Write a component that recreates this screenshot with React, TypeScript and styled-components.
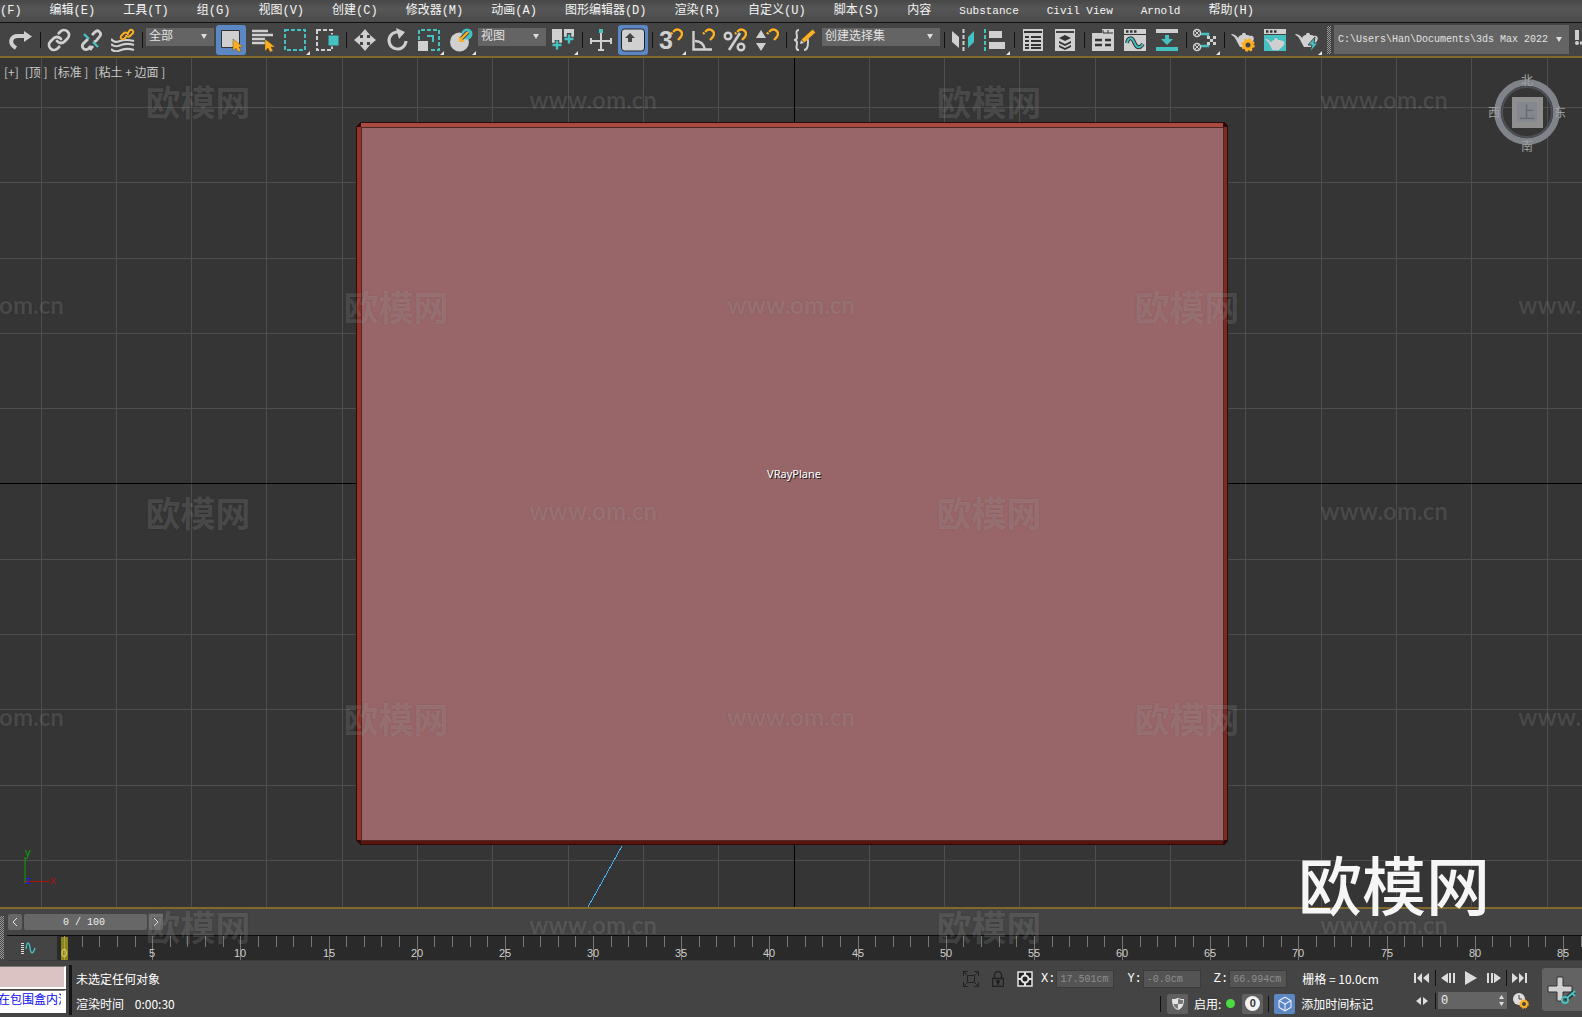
import React from "react";
import styled, { createGlobalStyle, css } from "styled-components";
import { Link as LinkIcon, Box as BoxIcon } from "lucide-react";

const C = {
  light: "#d0d0d0",
  teal: "#45c1c1",
  orange: "#fdb022",
  panel: "#444444",
  field: "#646464",
  gold: "#80692a",
  blue: "#5b87c5",
};
const cjk = `"Noto Sans CJK SC", sans-serif`;
const mono = `"Liberation Mono", "Noto Sans CJK SC", monospace`;

const Global = createGlobalStyle`
  *, *::before, *::after { box-sizing: border-box; }
  html, body { margin: 0; height: 100%; overflow: hidden; background: ${C.panel}; }
  button, input, select { font: inherit; color: inherit; margin: 0; }
  button > svg { flex: none; }
`;

const Shell = styled.div`
  position: relative;
  display: flex;
  flex-direction: column;
  height: 100vh;
  overflow: hidden;
  background: ${C.panel};
  color: #fff;
  font: 12px/16px ${mono};
`;

/* ---------- menu ---------- */
const MenuBar = styled.nav`
  display: flex;
  flex: none;
  gap: 28px;
  height: 23px;
  margin-left: -24px;
  background: linear-gradient(#484848, #565656 40%, #4b4b4b);
  border-bottom: 1px solid #111;
`;
const MenuItem = styled.button<{ $latin?: boolean }>`
  flex: none;
  padding: 0;
  border: 0;
  background: none;
  font-size: ${(p) => (p.$latin ? 11 : 12)}px;
  line-height: 20px;
  white-space: nowrap;
  color: #f4f4f4;
`;

/* ---------- toolbar ---------- */
const Toolbar = styled.div`
  display: flex;
  flex: none;
  align-items: center;
  height: 33px;
  padding-left: 5px;
  overflow: hidden;
`;
const Tool = styled.button<{ $active?: boolean; $more?: boolean }>`
  position: relative;
  display: flex;
  flex: none;
  align-items: center;
  justify-content: center;
  width: 30px;
  height: 30px;
  margin: 0 1px;
  padding: 0;
  border: 0;
  border-radius: 3px;
  background: ${(p) => (p.$active ? C.blue : "transparent")};
  color: ${C.light};
  ${(p) =>
    p.$more &&
    css`
      &::after {
        content: "";
        position: absolute;
        right: 0;
        bottom: 0;
        border: 2px solid transparent;
        border-right-color: #e4e4e4;
        border-bottom-color: #e4e4e4;
      }
    `}
`;
const Divider = styled.span<{ $h?: number }>`
  flex: none;
  width: 1px;
  height: ${(p) => p.$h ?? 16}px;
  background: #111;
`;
const ToolDivider = styled(Divider)`
  margin: 0 2px 0 3px;
`;
const Pick = styled.span<{ $w?: number; $tall?: boolean }>`
  position: relative;
  display: flex;
  width: ${(p) => (p.$w ? `${p.$w}px` : "auto")};
  flex: ${(p) => (p.$w ? "none" : "1")};
  height: ${(p) => (p.$tall ? 29 : 18)}px;
  margin: 0 1px ${(p) => (p.$tall ? 0 : 6)}px;
  &::after {
    content: "";
    position: absolute;
    right: 7px;
    top: calc(50% - 3px);
    border: 3px solid transparent;
    border-top: 5px solid #ddd;
    border-bottom: 0;
    pointer-events: none;
  }
`;
const Select = styled.select<{ $small?: boolean }>`
  appearance: none;
  width: 100%;
  padding: 0 16px 0 ${(p) => (p.$small ? 4 : 3)}px;
  border: 0;
  border-radius: 0;
  background: ${C.field};
  color: #e2e2e2;
  font-size: ${(p) => (p.$small ? 10 : 12)}px;
`;
const Grip = styled.span`
  flex: none;
  width: 4px;
  height: 28px;
  margin: 0 2px 0 4px;
  background: repeating-conic-gradient(#999 0 25%, #444 0 50%) 0 0 / 2px 2px;
`;
const ToolCut = styled(Tool)`
  width: 8px;
  margin: 0 0 0 4px;
  justify-content: flex-start;
  overflow: hidden;
`;

/* ---------- viewport ---------- */
const Viewport = styled.main`
  position: relative;
  flex: 1;
  min-height: 0;
  border: solid ${C.gold};
  border-width: 2px 0;
  background: #353535;
  overflow: hidden;
`;
const Scene = styled.svg`
  display: block;
  width: 100%;
  height: 100%;
`;
const ViewLabels = styled.div`
  position: absolute;
  top: 6px;
  left: 4px;
  display: flex;
  gap: 6px;
`;
const ViewLabel = styled.button`
  padding: 0;
  border: 0;
  background: none;
  color: #c8c8c8;
  font: 12px/16px ${cjk};
  white-space: pre;
`;
const Cube = styled.svg`
  position: absolute;
  top: 12px;
  right: 13px;
`;
const Tripod = styled.svg`
  position: absolute;
  left: 20px;
  bottom: 16px;
`;

/* ---------- timeline ---------- */
const Timeline = styled.section`
  display: flex;
  flex: none;
`;
const TimelineGrip = styled(Grip)`
  height: 43px;
  margin: 7px 3px 0 0;
`;
const TimelineBody = styled.div`
  flex: 1;
  min-width: 0;
`;
const Scrub = styled.div`
  display: flex;
  gap: 2px;
  height: 26px;
  padding: 5px 0 5px 1px;
`;
const ScrubButton = styled.button<{ $wide?: boolean }>`
  display: flex;
  align-items: center;
  justify-content: center;
  width: ${(p) => (p.$wide ? 123 : 14)}px;
  padding: ${(p) => (p.$wide ? "1px 3px 0 0" : 0)};
  border: 0;
  border-radius: 2px;
  background: #676767;
  color: #eee;
  font-size: 10px;
`;
const Track = styled.div`
  display: flex;
  height: 26px;
  border-top: 1px solid #0c0c0c;
  border-bottom: 1px solid #3a3a3a;
`;
const CurveToggle = styled.button`
  flex: none;
  width: 50px;
  padding: 0 8px 0 0;
  border: 0;
  background: ${C.panel};
  line-height: 0;
`;
const Ruler = styled.svg`
  flex: 1;
  min-width: 0;
  height: 24px;
  background: #2a2a2a;
  overflow: hidden;
  font: 11px "Liberation Sans", sans-serif;
`;

/* ---------- status ---------- */
const Status = styled.footer`
  display: flex;
  flex: none;
  height: 56px;
  padding-top: 4px;
`;
const Listener = styled.div`
  display: flex;
  flex: none;
  flex-direction: column;
  gap: 1px;
  width: 66px;
  padding-top: 1px;
`;
const ListenerField = styled.input<{ $pink?: boolean }>`
  width: 66px;
  height: 23px;
  padding: 0 3px 5px 0;
  border: solid #fff;
  border-width: 0 2px 2px 0;
  border-top: 1px solid #777;
  border-radius: 0;
  background: ${(p) => (p.$pink ? "#dcc3c3" : "#fff")};
  color: #0b0bf0;
  text-indent: -2px;
`;
const Prompt = styled.div`
  display: flex;
  flex: 1;
  flex-direction: column;
  gap: 9px;
  min-width: 0;
  margin-left: 3px;
  padding: 6px 0 0 4px;
  height: 50px;
  border-left: 3px solid #141414;
  font-family: ${cjk};
  white-space: pre;
`;
const Info = styled.div`
  display: flex;
  flex: none;
  flex-direction: column;
  gap: 4px;
  width: 441px;
  padding-top: 3px;
`;
const InfoRow = styled.div<{ $lead?: number }>`
  display: flex;
  align-items: center;
  height: 21px;
  padding-left: ${(p) => p.$lead ?? 0}px;
`;
const IconButton = styled.button<{ $fill?: string; $w?: number }>`
  position: relative;
  display: flex;
  flex: none;
  align-items: center;
  justify-content: center;
  width: ${(p) => p.$w ?? 21}px;
  height: 20px;
  padding: 0;
  border: 0;
  border-radius: 2px;
  background: ${(p) => p.$fill ?? "none"};
  color: ${C.light};
`;
const StartButton = styled(IconButton)`
  padding-left: 8px;
`;
const Axes = styled.div`
  display: flex;
  margin-left: 4px;
`;
const AxisLabel = styled.label`
  display: flex;
  align-items: center;
  gap: 1px;
  margin-right: 13px;
`;
const AxisInput = styled.input`
  width: 58px;
  height: 18px;
  padding: 1px 3px 0;
  border: 1px solid #3c3c3c;
  border-radius: 0;
  background: #545454;
  color: #8e8e8e;
  font-size: 10px;
`;
const GridText = styled.span`
  margin-left: 2px;
  font: 12px/16px ${cjk};
  white-space: nowrap;
`;
const Small = styled.span`
  font: 12px/16px ${cjk};
  white-space: nowrap;
  margin: 0 5px 0 6px;
`;
const Dot = styled.span`
  width: 9px;
  height: 9px;
  margin-right: 7px;
  border-radius: 50%;
  background: #4cdb43;
`;
const Zero = styled.span`
  width: 15px;
  height: 15px;
  border-radius: 50%;
  background: #f2f2f2;
  color: #333;
  font: bold 11px/15px "Liberation Sans", sans-serif;
`;
const SideDivider = styled(Divider)<{ $l: number; $r: number }>`
  margin: 0 ${(p) => p.$r}px 0 ${(p) => p.$l}px;
`;
const Player = styled.div`
  display: flex;
  flex: none;
  flex-direction: column;
  gap: 2px;
  width: 138px;
  padding-top: 2px;
`;
const PlayerRow = styled.div`
  display: flex;
  align-items: center;
  height: 21px;
`;
const Frame = styled.label`
  position: relative;
  display: flex;
  margin-left: 2px;
`;
const FrameInput = styled.input`
  width: 69px;
  height: 17px;
  padding: 0 3px;
  border: 0;
  border-radius: 0;
  background: ${C.field};
  color: #eee;
`;
const Arrows = styled.svg`
  position: absolute;
  right: 3px;
  top: 3px;
`;
const KeyButton = styled.button`
  flex: none;
  width: 44px;
  height: 43px;
  margin: 3px -4px 0 4px;
  padding: 0 5px 0 0;
  border: 0;
  border-radius: 3px;
  background: #636363;
  line-height: 0;
`;

/* ---------- overlay ---------- */
const Overlay = styled.div`
  position: absolute;
  inset: 0;
  overflow: hidden;
  pointer-events: none;
`;
const Mark = styled.span<{ $x: number; $y: number; $url?: boolean }>`
  position: absolute;
  left: ${(p) => p.$x}%;
  top: ${(p) => p.$y}px;
  width: 128px;
  margin-left: -64px;
  text-align: center;
  white-space: nowrap;
  color: rgba(255, 255, 255, 0.13);
  text-shadow: 0 0 2px rgba(0, 0, 0, 0.12);
  font: ${(p) => (p.$url ? `bold 24px/36px Lato, sans-serif` : `bold 35px/36px ${cjk}`)};
`;
const Brand = styled.strong`
  position: absolute;
  right: 92px;
  bottom: 103px;
  font: 500 64px/64px ${cjk};
  color: #f6f6f6;
`;

/* ---------- icons ---------- */
const Svg = ({ children, s = 24, h }: { children: React.ReactNode; s?: number; h?: number }) => (
  <svg width={s} height={h ?? s} viewBox={`0 0 ${s} ${h ?? s}`} fill="none" aria-hidden="true">
    {children}
  </svg>
);
const cursor = <path d="M14 11v12l3-3 2 4 3-1-2-4h4z" fill={C.orange} stroke="#6a501c" strokeWidth=".5" />;
const magnet = (
  <path d="M12 6l3-3c3-3 8-1 8 3 0 2-1 3-4 6" stroke={C.orange} strokeWidth="2.4" strokeDasharray="2 1 30" />
);
const pot = (
  <path
    d="M0 6c3 0 5 1 7 4 1-2 2-3 4-3 0-3 4-3 4 0 2 0 3 0 4 1 3-1 5 2 3 5-1 2-3 3-4 4l-2 2H9c-2-3-3-6-5-9C3 8 1 8 0 6z"
    fill={C.light}
  />
);
const I: Record<string, React.ReactNode> = {
  redo: <Svg><path d="M7 20C-1 15 2 8 9 8h7" stroke={C.light} strokeWidth="4" /><path d="M15 3l8 5.5-8 5.5z" fill={C.light} /></Svg>,
  link: <LinkIcon size={24} strokeWidth={2.8} color={C.light} />,
  unlink: (
    <Svg>
      <path d="M13 7l3-3c3-3 7 1 5 4l-4 5-2 1M9 11l-5 5c-2 3 1 7 5 5l3-3M11 22l3-4" stroke={C.light} strokeWidth="2.8" />
      <path d="M5 6l5 5M14 14l5 5" stroke={C.teal} strokeWidth="2.4" />
    </Svg>
  ),
  bind: (
    <Svg>
      <path d="M0 11c3 4 6 3 9 2s6-2 14 0M0 16c4 4 7 2 10 1s7-2 13 0M0 21c4 4 7 2 10 1s7-2 13 0" stroke={C.light} strokeWidth="2.2" />
      <path d="M15 9l-2 2c-2 1-4-1-3-3l3-3c2-1 4 0 4 2M17 5l2-3c2-1 4 1 3 3l-3 3c-1 1-4 1-4-1" stroke={C.orange} strokeWidth="2" />
    </Svg>
  ),
  select: <Svg><path d="M2.500 2.500h18v17h-18z" fill={C.light} stroke="#333" />{cursor}</Svg>,
  byName: <Svg><path d="M1 3h16M1 7h21M1 11h13M1 15h13" stroke={C.light} strokeWidth="2.4" />{cursor}</Svg>,
  region: <Svg><path d="M2 2h20v20H2z" stroke={C.teal} strokeWidth="2" strokeDasharray="4 2" /></Svg>,
  crossing: <Svg><path d="M2 2h15v20H2z" stroke={C.light} strokeWidth="2" strokeDasharray="4 2" /><path d="M13 7h11v11H13z" fill={C.teal} stroke="#444" /></Svg>,
  move: <Svg><path d="M12 1l5 6h-3v3h3V7l6 5-6 5v-3h-3v3h3l-5 6-5-6h3v-3H7v3l-6-5 6-5v3h3V7H7z" fill={C.light} /></Svg>,
  rotate: <Svg><path d="M18 6a8.500 8.500 0 1 0 3 7" stroke={C.light} strokeWidth="3" /><path d="M11 0l9 4-6 7z" fill={C.light} /></Svg>,
  scale: <Svg><path d="M2 12V2h20v20H13" stroke={C.teal} strokeWidth="2" strokeDasharray="4 2" /><path d="M1 13h10v10H1z" fill={C.light} /><path d="M10 8h6v6" stroke={C.teal} strokeWidth="2" /></Svg>,
  place: <Svg><circle cx="10.500" cy="14" r="9.500" fill={C.light} /><circle cx="18" cy="6" r="5.500" fill={C.teal} /><path d="M19 4l-7 7" stroke="#444" strokeWidth="4" /><path d="M19 4l-7 7" stroke={C.orange} strokeWidth="2.400" /><path d="M10 14V8l6 6z" fill={C.orange} /></Svg>,
  pivot: (
    <Svg>
      <path d="M1 1h10v14H1zM13 1h10v12H13z" fill={C.light} />
      <path d="M6 12v11M1 17h11M18 5v12M13 11h11" stroke="#444" strokeWidth="4.500" />
      <path d="M6 12.500v9M1.500 17h9M18 6.500v9M13.500 11h9" stroke={C.teal} strokeWidth="2.400" />
    </Svg>
  ),
  manip: <Svg><path d="M12 5v18M1 13h22M2 10v6M22 10v6M9 22h6" stroke={C.light} strokeWidth="2" /><path d="M10 1h4v4h-4z" fill={C.teal} /></Svg>,
  keyboard: <Svg><rect x=".5" y="1" width="23" height="22" rx="3" fill={C.light} stroke="#222" /><path d="M9 5l5 5h-3v4H7v-4H4z" fill="#444" /></Svg>,
  snap: (
    <Svg>
      <text x="0" y="21" fill={C.light} fontFamily="Liberation Sans, sans-serif" fontWeight="bold" fontSize="25">3</text>
      {magnet}
    </Svg>
  ),
  angle: <Svg><path d="M2.500 3v18.500H21M4 13c5 0 9 3 10 9" stroke={C.light} strokeWidth="2.400" />{magnet}</Svg>,
  percent: <Svg><circle cx="5" cy="8" r="3.300" stroke={C.light} strokeWidth="2.400" /><circle cx="18" cy="19" r="3.300" stroke={C.light} strokeWidth="2.400" /><path d="M6 22L17 5" stroke={C.light} strokeWidth="2.600" />{magnet}</Svg>,
  spin: <Svg><path d="M6 2l5 8H1zM6 23l5-8H1z" fill={C.light} />{magnet}</Svg>,
  sets: <Svg><path d="M6 2C2 2 4 7 4 9s-1 3-3 3c2 0 3 1 3 3s-2 7 2 7M13 10c2 0 2 2 2 4s0 8-4 8" stroke={C.light} strokeWidth="2" /><path d="M10 13L21 3" stroke={C.orange} strokeWidth="4" /><path d="M7 16l1-4 3 3z" fill={C.light} /></Svg>,
  mirror: <Svg><path d="M1 3l7 6v11l-7-6z" fill={C.light} /><path d="M23 3l-6 6v11l6-6z" fill={C.teal} /><path d="M12.500 1v22" stroke={C.light} strokeWidth="2" strokeDasharray="4 2" /></Svg>,
  align: <Svg><path d="M2 1v22" stroke={C.teal} strokeWidth="2" strokeDasharray="4 2" /><path d="M6 3h13v7H6zM6 14h16v7H6z" fill={C.light} /></Svg>,
  explorer: <Svg><path d="M2 1h20v22H2z" fill={C.light} /><path d="M3 4h18M4 9h4M10 9h10M4 13h4M10 13h10M4 17h4M10 17h10M4 20h4M10 20h10" stroke="#333" strokeWidth="1.800" /></Svg>,
  layers: <Svg><path d="M2 1h20v22H2z" fill={C.light} /><path d="M3 4h18" stroke="#333" strokeWidth="1.800" /><path d="M12 7l6 3-6 3-6-3zM6 13l6 3 6-3v2l-6 3-6-3zM6 17l6 3 6-3v2l-6 3-6-3z" fill="#333" /></Svg>,
  ribbon: <Svg><path d="M1 5h10V1h12v22H1z" fill={C.light} /><path d="M12 2v3h10M17 2v3" stroke="#333" /><path d="M4 12h7M14 12h6M4 17h7M14 17h6" stroke="#333" strokeWidth="2.400" /></Svg>,
  curve: <Svg><path d="M1 1h22v22H1z" fill={C.light} /><path d="M1 6.500h22" stroke="#333" /><path d="M3 3.500h2.500M7 3.500h2.500M11 3.500h2.500" stroke="#333" strokeWidth="2.500" /><path d="M4 15c1-6 5-6 7-1s5 8 9 2" stroke="#333" strokeWidth="4" /><path d="M4 15c1-6 5-6 7-1s5 8 9 2" stroke={C.teal} strokeWidth="2" /></Svg>,
  dope: <Svg><path d="M1 1h22v4H1z" fill={C.light} /><path d="M1 19h22v4H1zM10 7h4v4h4l-6 6-6-6h4z" fill={C.teal} /></Svg>,
  schematic: (
    <Svg>
      <path d="M8 6h7v4M8 18h7v-3" stroke={C.teal} strokeWidth="2.400" />
      {[[4, 5], [4, 19]].map(([x, y]) => (
        <g key={y}><circle cx={x} cy={y} r="3.500" stroke={C.light} strokeWidth="1.500" /><path d={`M${x - 2} ${y - 2}l4 4m0-4l-4 4`} stroke={C.light} /></g>
      ))}
      <path d="M14 8h3v3h-3zM20 8h3v3h-3zM17 11h3v3h-3zM14 14h3v3h-3zM20 14h3v3h-3z" fill={C.light} />
    </Svg>
  ),
  renderSetup: <Svg>{pot}<circle cx="17" cy="17" r="4" fill="#444" stroke={C.orange} strokeWidth="3" /><circle cx="17" cy="17" r="5.800" stroke={C.orange} strokeWidth="2" strokeDasharray="2.500 2.050" /></Svg>,
  renderFrame: <Svg><path d="M1 1h22v5H1z" fill={C.light} /><path d="M3 3.500h2.500M7 3.500h2.500M11 3.500h2.500" stroke="#333" strokeWidth="2.500" /><path d="M1 7h22v16H1z" fill={C.teal} /><g transform="translate(2 6) scale(.85)">{pot}</g></Svg>,
  render: <Svg>{pot}<path d="M20 9l-7 8h4l-2 7 8-9h-4z" fill={C.teal} stroke="#444" /></Svg>,
  cut: <Svg><path d="M3 2v10" stroke={C.light} strokeWidth="4" /><circle cx="3" cy="15" r="2" fill={C.light} /><path d="M6 15h9" stroke={C.light} strokeWidth="3" /></Svg>,
};

const pct = (x: number) => (x / 1582) * 100;
const names = [
  "文件(F)", "编辑(E)", "工具(T)", "组(G)", "视图(V)", "创建(C)", "修改器(M)", "动画(A)", "图形编辑器(D)",
  "渲染(R)", "自定义(U)", "脚本(S)", "内容", "Substance", "Civil View", "Arnold", "帮助(H)",
];
type Item = [string, string, ("active" | "more")?];
const Tools = ({ items }: { items: Item[] }) => (
  <>
    {items.map(([icon, label, flag]) => (
      <Tool key={icon} aria-label={label} $active={flag === "active"} $more={flag === "more"}>
        {I[icon]}
      </Tool>
    ))}
  </>
);
const Drop = ({ w, label, value, tall }: { w?: number; label: string; value: string; tall?: boolean }) => (
  <Pick $w={w} $tall={tall}>
    <Select aria-label={label} $small={tall}>
      <option>{value}</option>
    </Select>
  </Pick>
);

const STEP = 75.3;
const SceneView = () => {
  const range = Array.from({ length: 31 }, (_, i) => i - 15).filter((i) => i !== 0);
  const edge = "#2b0c0a";
  return (
    <Scene>
      <svg x="50%" y="50%" overflow="visible">
        <g transform="translate(3 .5)" shapeRendering="crispEdges">
          {range.map((i) => (
            <g key={i} fill="#4e4e4e">
              <rect x={Math.floor(i * STEP)} y="-2000" width="1" height="4000" />
              <rect x="-3000" y={Math.ceil(i * STEP)} width="6000" height="1" />
            </g>
          ))}
          <rect x="0" y="-2000" width="1" height="4000" fill="#000" />
          <rect x="-3000" y="0" width="6000" height="1" fill="#000" />
          <path d="M-438-357l4-4H430l4 4V358l-4 4H-434l-4-4z" fill={edge} />
          <path d="M-437-356h4V357h-4z" fill="#963228" />
          <path d="M429-356h4V357h-4z" fill="#7e2921" />
          <path d="M-433-360H429v4H-433z" fill="#aa4a42" />
          <path d="M-433 357H429v4H-433z" fill="#5c120d" />
          <path d="M-433-356H429V357H-433z" fill="#986669" stroke="#4d2827" />
          <path d="M-172 363l-34 61" stroke="#4aaef2" />
        </g>
        <g textAnchor="middle" fontFamily="Noto Sans, sans-serif" fontSize="11">
          <text x="4" y="-4" fill="#202020">VRayPlane</text>
          <text x="3" y="-5" fill="#fff">VRayPlane</text>
        </g>
      </svg>
    </Scene>
  );
};

const RulerView = () => {
  const frames = Array.from({ length: 101 }, (_, i) => i);
  const at = (i: number) => Math.round(7 + i * 17.635);
  return (
    <Ruler>
      <rect x="4" y="1" width="7" height="24" fill="#8b841f" />
      {frames.map((i) => (
        <rect key={i} x={at(i)} y="0" width="1" height={i % 5 ? 11 : 25} fill={i ? "#777" : "#aaa340"} />
      ))}
      {frames.filter((i) => i % 5 === 0).map((i) => (
        <text key={i} x={at(i)} y="21" textAnchor="middle" fill={i ? "#cfcfcf" : "#e3dc6a"}>{i}</text>
      ))}
    </Ruler>
  );
};

const marks: { x: number; y: number; url?: boolean }[] = [];
[103, 308, 514, 720, 928].forEach((y, row) => {
  const odd = row % 2;
  [198, 989].forEach((x) => marks.push({ x: x + odd * 198, y: y - 20 }));
  [-198, 593, 1384].forEach((x) => marks.push({ x: x + odd * 198, y: y - 21, url: true }));
});

const Axis = ({ name, value }: { name: string; value: string }) => (
  <AxisLabel>
    {name}:
    <AxisInput defaultValue={value} />
  </AxisLabel>
);

export default function App() {
  return (
    <Shell>
      <Global />
      <MenuBar>
        {names.map((n) => (
          <MenuItem key={n} $latin={/^[A-Z]/.test(n)}>{n}</MenuItem>
        ))}
      </MenuBar>

      <Toolbar>
        <Tools items={[["redo", "重做"]]} />
        <ToolDivider />
        <Tools items={[["link", "链接"], ["unlink", "取消链接"], ["bind", "绑定"]]} />
        <ToolDivider />
        <Drop w={68} label="选择过滤器" value="全部" />
        <Tools items={[["select", "选择", "active"], ["byName", "按名称选择"], ["region", "区域", "more"], ["crossing", "窗口/交叉"]]} />
        <ToolDivider />
        <Tools items={[["move", "移动"], ["rotate", "旋转"], ["scale", "缩放", "more"], ["place", "放置", "more"]]} />
        <Drop w={68} label="参考坐标系" value="视图" />
        <Tools items={[["pivot", "轴点中心", "more"]]} />
        <ToolDivider />
        <Tools items={[["manip", "操纵"], ["keyboard", "键盘快捷键", "active"]]} />
        <ToolDivider />
        <Tools items={[["snap", "捕捉", "more"], ["angle", "角度捕捉"], ["percent", "百分比捕捉"], ["spin", "微调器捕捉"]]} />
        <ToolDivider />
        <Tools items={[["sets", "编辑选择集"]]} />
        <Drop w={118} label="命名选择集" value="创建选择集" />
        <ToolDivider />
        <Tools items={[["mirror", "镜像"], ["align", "对齐", "more"]]} />
        <ToolDivider />
        <Tools items={[["explorer", "场景资源管理器"], ["layers", "层资源管理器"]]} />
        <ToolDivider />
        <Tools items={[["ribbon", "功能区"], ["curve", "曲线编辑器"], ["dope", "摄影表"]]} />
        <ToolDivider />
        <Tools items={[["schematic", "材质编辑器", "more"]]} />
        <ToolDivider />
        <Tools items={[["renderSetup", "渲染设置"], ["renderFrame", "渲染帧窗口"], ["render", "渲染", "more"]]} />
        <Grip />
        <Drop label="项目文件夹" value="C:\Users\Han\Documents\3ds Max 2022" tall />
        <ToolCut aria-label="更多">{I.cut}</ToolCut>
      </Toolbar>

      <Viewport>
        <SceneView />
        <ViewLabels>
          {["[+]", "[顶 ]", "[标准 ]", "[粘土 + 边面 ]"].map((t) => (
            <ViewLabel key={t}>{t}</ViewLabel>
          ))}
        </ViewLabels>
        <Cube width="84" height="84" viewBox="0 0 84 84" fontFamily={cjk} fontSize="12" fill="#a0a0a0" textAnchor="middle">
          <circle cx="42" cy="42" r="29.500" fill="none" stroke="#80838a" strokeWidth="6.500" />
          <circle cx="42" cy="42" r="25" fill="none" stroke="#4c4f56" strokeWidth="2" />
          <path d="M27 27h31v31H27z" fill="#8f8f8f" />
          <path d="M32 32h20v20H32z" fill="#84878e" />
          <text x="42" y="48" fontSize="16" fill="#666973">上</text>
          <text x="42" y="15">北</text>
          <text x="42" y="81">南</text>
          <text x="9" y="47">西</text>
          <text x="75" y="47">东</text>
        </Cube>
        <Tripod width="40" height="44" viewBox="0 0 40 44" fontFamily="Noto Sans, sans-serif" fontSize="11">
          <path d="M5 36V10" stroke="#0aa00a" />
          <path d="M5 34.500h25" stroke="#b01010" />
          <text x="5" y="9" fill="#0aa00a">y</text>
          <text x="6" y="37" fill="#1a1af0">z</text>
          <text x="30" y="37" fill="#b01010">x</text>
        </Tripod>
      </Viewport>

      <Timeline>
        <TimelineGrip />
        <TimelineBody>
          <Scrub>
            <ScrubButton aria-label="上一帧"><Svg s={8} h={10}><path d="M6 1L2 5l4 4" stroke="#e8e8e8" /></Svg></ScrubButton>
            <ScrubButton $wide>0 / 100</ScrubButton>
            <ScrubButton aria-label="下一帧"><Svg s={8} h={10}><path d="M2 1l4 4-4 4" stroke="#e8e8e8" /></Svg></ScrubButton>
          </Scrub>
          <Track>
            <CurveToggle aria-label="打开迷你曲线编辑器">
              <Svg s={16} h={12}>
                <path d="M2.500 1v11" stroke="#ddd" strokeWidth="3" strokeDasharray="1 1" />
                <path d="M6 7c1-8 3-8 4-1s3 6 5 0" stroke={C.teal} strokeWidth="1.400" />
              </Svg>
            </CurveToggle>
            <RulerView />
          </Track>
        </TimelineBody>
      </Timeline>

      <Status>
        <Listener>
          <ListenerField $pink aria-label="宏录制器" />
          <ListenerField aria-label="侦听器" defaultValue="在包围盒内渲" />
        </Listener>
        <Prompt>
          <span>未选定任何对象</span>
          <span>渲染时间{"    "}0:00:30</span>
        </Prompt>
        <Info>
          <InfoRow>
            <IconButton aria-label="孤立当前选择" $w={24}>
              <Svg s={16}><path d="M4.500 4.500h7v7h-7zM.5 5V.5H5M11 .5h4.500V5M15.500 11v4.500H11M5 15.500H.5V11M1 1l3 3M15 1l-3 3M1 15l3-3M15 15l-3-3" stroke="#222" /></Svg>
            </IconButton>
            <IconButton aria-label="选择锁定" $w={30}>
              <Svg s={12} h={16}><path d="M.5 7.500h11v8H.5zM2.500 7V4C3-.5 9-.5 9.500 4v3" stroke="#222" strokeWidth="1.400" /><path d="M6 9v5" stroke="#222" strokeWidth="2" /><circle cx="6" cy="10.500" r="2" fill="#222" /></Svg>
            </IconButton>
            <IconButton aria-label="绝对模式" $w={24}>
              <Svg s={16}><path d="M1 1h14v14H1z" fill="#222" stroke="#e4e4e4" strokeWidth="1.500" /><circle cx="8" cy="8" r="3.500" stroke="#e4e4e4" strokeWidth="2" /><path d="M8 1v4M8 11v4M1 8h4M11 8h4" stroke="#e4e4e4" strokeWidth="2" /></Svg>
            </IconButton>
            <Axes>
              <Axis name="X" value="17.501cm" />
              <Axis name="Y" value="-0.0cm" />
              <Axis name="Z" value="66.994cm" />
            </Axes>
            <GridText>栅格 = 10.0cm</GridText>
          </InfoRow>
          <InfoRow $lead={201}>
            <SideDivider $l={0} $r={6} />
            <IconButton aria-label="安全场景" $fill="#606060">
              <Svg s={12}><path d="M6 0c2 1 4 1 6 1 0 5-1 9-6 11C1 10 0 6 0 1c2 0 4 0 6-1z" fill="#e4e4e4" /><path d="M6 6V1c2 .5 3 1 5 1 0 1 0 3-.5 4zM6 6v5C3 10 2 8 1.500 6z" fill="#777" /></Svg>
            </IconButton>
            <Small>启用:</Small>
            <Dot />
            <IconButton $fill="#606060"><Zero>0</Zero></IconButton>
            <SideDivider $l={5} $r={5} />
            <IconButton aria-label="时间标记" $fill={C.blue}><BoxIcon size={16} color="#eef" strokeWidth={1.600} /></IconButton>
            <Small>添加时间标记</Small>
          </InfoRow>
        </Info>
        <Player>
          <PlayerRow>
            <StartButton aria-label="转至开头" $w={35}><Svg s={15} h={12}><path d="M0 1h2v10H0zM8 1v10L3 6zM15 1v10L9 6z" fill="#ddd" /></Svg></StartButton>
            <Divider />
            <IconButton aria-label="上一帧" $w={23}><Svg s={14} h={12}><path d="M7 1v10L0 6zM8 1h2v10H8zM12 1h2v10h-2z" fill="#ddd" /></Svg></IconButton>
            <IconButton aria-label="播放" $w={23}><Svg s={14} h={14}><path d="M1 0l12 7-12 7z" fill="#ddd" /></Svg></IconButton>
            <IconButton aria-label="下一帧" $w={24}><Svg s={14} h={12}><path d="M0 1h2v10H0zM4 1h2v10H4zM7 1v10l7-5z" fill="#ddd" /></Svg></IconButton>
            <Divider />
            <IconButton aria-label="转至结尾" $w={25}><Svg s={15} h={12}><path d="M13 1h2v10h-2zM0 1v10l6-5zM7 1v10l5-5z" fill="#ddd" /></Svg></IconButton>
          </PlayerRow>
          <PlayerRow>
            <StartButton aria-label="关键点模式" $w={35}><Svg s={12}><path d="M5 2v8L0 6zM7 2v8l5-4z" fill="#ddd" /></Svg></StartButton>
            <Divider />
            <Frame>
              <FrameInput aria-label="当前帧" defaultValue="0" />
              <Arrows width="5" height="11" viewBox="0 0 5 11"><path d="M0 4l2.500-4L5 4zM0 7l2.500 4L5 7z" fill="#ddd" /></Arrows>
            </Frame>
            <IconButton aria-label="时间配置" $w={27}><Svg s={16}><circle cx="6" cy="6" r="6" fill="#ddd" /><path d="M6 2v4h3" stroke="#444" /><circle cx="11" cy="11" r="3" fill="#444" stroke={C.orange} strokeWidth="2" /><circle cx="11" cy="11" r="4.300" stroke={C.orange} strokeDasharray="2 1.400" /></Svg></IconButton>
          </PlayerRow>
        </Player>
        <KeyButton aria-label="设置关键点">
          <Svg s={30}>
            <path d="M10 2h6v9h9v6h-9v9h-6v-9H1v-6h9z" fill={C.light} stroke="#333" />
            <path d="M18 25l9-8" stroke="#333" strokeWidth="5" /><circle cx="18" cy="25" r="3" stroke={C.teal} strokeWidth="2" /><path d="M20 23l8-7M25 18l3 3" stroke={C.teal} strokeWidth="2" />
          </Svg>
        </KeyButton>
      </Status>

      <Overlay aria-hidden="true">
        {marks.map((m) => (
          <Mark key={`${m.x}-${m.y}`} $x={pct(m.x)} $y={m.y} $url={m.url}>
            {m.url ? "www.om.cn" : "欧模网"}
          </Mark>
        ))}
        <Brand>欧模网</Brand>
      </Overlay>
    </Shell>
  );
}
